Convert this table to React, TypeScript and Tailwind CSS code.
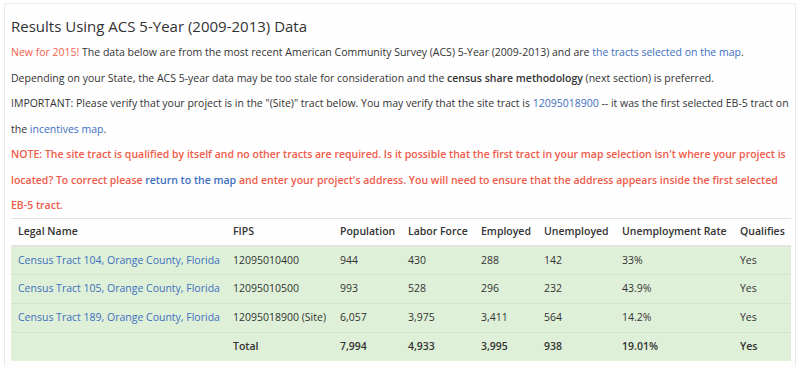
const rows = [
  { name: "Census Tract 104, Orange County, Florida", fips: "12095010400", pop: "944", lf: "430", emp: "288", unemp: "142", rate: "33%", q: "Yes" },
  { name: "Census Tract 105, Orange County, Florida", fips: "12095010500", pop: "993", lf: "528", emp: "296", unemp: "232", rate: "43.9%", q: "Yes" },
  { name: "Census Tract 189, Orange County, Florida", fips: "12095018900 (Site)", pop: "6,057", lf: "3,975", emp: "3,411", unemp: "564", rate: "14.2%", q: "Yes" },
];

const headers = ["Legal Name", "FIPS", "Population", "Labor Force", "Employed", "Unemployed", "Unemployment Rate", "Qualifies"];
const widths = ["w-[215px]", "w-[107px]", "w-[68px]", "w-[73px]", "w-[63px]", "w-[78px]", "w-[118px]", "w-[58px]"];

const link = "text-[#3d6fc0]";
const td = "px-[7px] h-[28.7px] align-middle whitespace-nowrap";

export default function App() {
  return (
    <div className="w-[800px] h-[366px] overflow-hidden bg-white pl-[4px] pr-[4px] pt-[3px] text-[#333] text-[10.5px] font-['Open_Sans',sans-serif]">
      <div className="border border-[#ebebeb] bg-[#fefefe] px-[6px] pb-[6px] h-[370px]">
        <h3 className="text-[15px] font-medium leading-[22px] mt-[11px] mb-[3px] text-[#333]">Results Using ACS 5-Year (2009-2013) Data</h3>
        <p className="leading-[25.5px]">
          <span className="text-[#f0604d]">New for 2015!</span> The data below are from the most recent American Community Survey (ACS) 5-Year (2009-2013) and are{" "}
          <span className={link}>the tracts selected on the map</span>.
        </p>
        <p className="leading-[25.5px]">
          Depending on your State, the ACS 5-year data may be too stale for consideration and the <b className="font-semibold">census share methodology</b> (next section) is preferred.
        </p>
        <p className="leading-[25.5px]">
          IMPORTANT: Please verify that your project is in the "(Site)" tract below. You may verify that the site tract is <span className={link}>12095018900</span> -- it was the first selected EB-5 tract on the <span className={link}>incentives map</span>.
        </p>
        <p className="leading-[25.5px] font-semibold text-[#ee5b4a]">
          NOTE: The site tract is qualified by itself and no other tracts are required. Is it possible that the first tract in your map selection isn't where your project is located? To correct please <span className="text-[#3d6fc0]">return to the map</span> and enter your project's address. You will need to ensure that the address appears inside the first selected EB-5 tract.
        </p>
        <table className="w-[780px] mt-[-1px] border-collapse table-fixed border-t border-[#e3e3e3]">
          <thead>
            <tr className="border-b-2 border-[#e3e3e3]">
              {headers.map((h, i) => (
                <th key={h} className={`${widths[i]} ${td} h-[28px] text-left font-semibold`}>{h}</th>
              ))}
            </tr>
          </thead>
          <tbody className="bg-[#dff0d8]">
            {rows.map((r) => (
              <tr key={r.name} className="border-b border-[#d3e3cc]">
                <td className={`${td} ${link}`}>{r.name}</td>
                <td className={td}>{r.fips}</td>
                <td className={td}>{r.pop}</td>
                <td className={td}>{r.lf}</td>
                <td className={td}>{r.emp}</td>
                <td className={td}>{r.unemp}</td>
                <td className={td}>{r.rate}</td>
                <td className={td}>{r.q}</td>
              </tr>
            ))}
            <tr className="font-semibold">
              <td className={td}></td>
              <td className={td}>Total</td>
              <td className={td}>7,994</td>
              <td className={td}>4,933</td>
              <td className={td}>3,995</td>
              <td className={td}>938</td>
              <td className={td}>19.01%</td>
              <td className={td}>Yes</td>
            </tr>
          </tbody>
        </table>
      </div>
    </div>
  );
}
